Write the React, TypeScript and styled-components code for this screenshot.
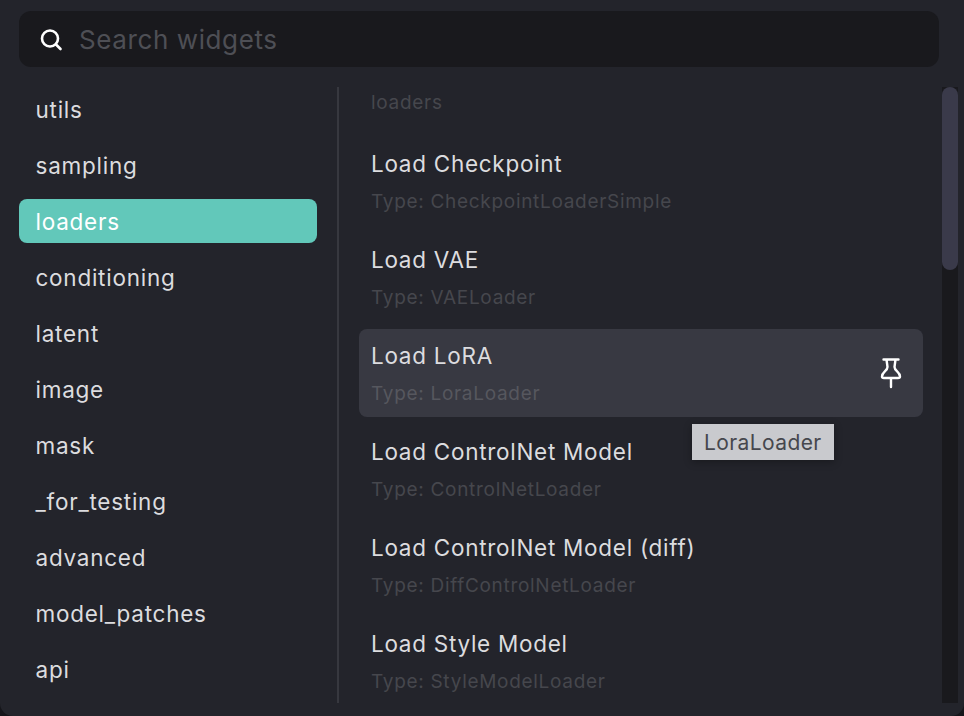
import { createGlobalStyle, styled } from 'styled-components';

const categories = [
  'utils',
  'sampling',
  'loaders',
  'conditioning',
  'latent',
  'image',
  'mask',
  '_for_testing',
  'advanced',
  'model_patches',
  'api',
];

const widgets = [
  { title: 'Load Checkpoint', type: 'CheckpointLoaderSimple' },
  { title: 'Load VAE', type: 'VAELoader' },
  { title: 'Load LoRA', type: 'LoraLoader', hovered: true },
  { title: 'Load ControlNet Model', type: 'ControlNetLoader' },
  { title: 'Load ControlNet Model (diff)', type: 'DiffControlNetLoader' },
  { title: 'Load Style Model', type: 'StyleModelLoader' },
];

const GlobalStyle = createGlobalStyle`
  html, body {
    margin: 0;
    height: 100%;
    overflow: hidden;
    background: #15151a;
  }
`;

const Panel = styled.div`
  width: 964px;
  height: 716px;
  box-sizing: border-box;
  padding: 11px 25px 0 19px;
  border-radius: 0 0 13px 13px;
  background: #23242b;
  font-family: Inter, sans-serif;
  overflow: hidden;
`;

const SearchBar = styled.div`
  display: flex;
  align-items: center;
  gap: 16px;
  height: 56px;
  box-sizing: border-box;
  padding-left: 21px;
  border-radius: 12px;
  background: #19191d;
`;

const SearchIcon = styled.svg`
  width: 23px;
  height: 23px;
  flex: none;
`;

const SearchText = styled.span`
  font-size: 26px;
  letter-spacing: 0.6px;
  color: #4e4f55;
`;

const Body = styled.div`
  display: flex;
  margin-top: 20px;
  height: 616px;
`;

const Sidebar = styled.nav`
  width: 298px;
  flex: none;
  display: flex;
  flex-direction: column;
  gap: 12px;
`;

const Category = styled.div<{ $active?: boolean }>`
  height: 44px;
  line-height: 46px;
  padding-left: 16.5px;
  border-radius: 8px;
  font-size: 22.5px;
  letter-spacing: 0.75px;
  color: ${(p) => (p.$active ? '#ffffff' : '#dcdcdf')};
  background: ${(p) => (p.$active ? '#62c8ba' : 'transparent')};
`;

const Divider = styled.div`
  width: 2px;
  flex: none;
  margin-left: 20px;
  background: #37383f;
`;

const List = styled.div`
  flex: none;
  width: 564px;
  margin-left: 20px;
  display: flex;
  flex-direction: column;
`;

const Heading = styled.div`
  flex: none;
  height: 42px;
  line-height: 32px;
  padding-left: 12px;
  font-size: 19px;
  letter-spacing: 0.7px;
  color: #46474d;
`;

const Row = styled.div<{ $hovered?: boolean }>`
  position: relative;
  flex: none;
  height: 88px;
  margin-top: 8px;
  box-sizing: border-box;
  padding: 12px 12px 0;
  border-radius: 8px;
  background: ${(p) => (p.$hovered ? '#383942' : 'transparent')};
`;

const Title = styled.div`
  font-size: 22.5px;
  line-height: 30px;
  letter-spacing: 0.72px;
  color: #dcdcdf;
`;

const TypeLine = styled.div<{ $hovered?: boolean }>`
  margin-top: 11px;
  font-size: 19px;
  line-height: 24px;
  letter-spacing: 0.7px;
  color: ${(p) => (p.$hovered ? '#56575e' : '#46474d')};
`;

const PinIcon = styled.svg`
  position: absolute;
  right: 19px;
  top: 26px;
  width: 26px;
  height: 34px;
`;

const Tooltip = styled.div`
  position: absolute;
  left: 333px;
  top: 95px;
  padding: 0 12px;
  height: 36px;
  line-height: 37px;
  font-size: 21px;
  letter-spacing: 0.4px;
  color: #46474d;
  background: #c9cace;
  box-shadow: 0 2px 8px rgba(0, 0, 0, 0.3);
  z-index: 2;
`;

const ScrollTrack = styled.div`
  flex: none;
  width: 16px;
  margin-left: 19px;
  background: #19191d;
`;

const ScrollThumb = styled.div`
  height: 183px;
  border-radius: 8px;
  background: #3a3a4a;
`;

export default function App() {
  return (
    <Panel>
      <GlobalStyle />
      <SearchBar>
        <SearchIcon viewBox="0 0 23 23" fill="none" stroke="#ffffff" strokeWidth="2.6" strokeLinecap="round">
          <circle cx="10" cy="10.5" r="8" />
          <path d="M16 16.5 L20.5 21" />
        </SearchIcon>
        <SearchText>Search widgets</SearchText>
      </SearchBar>
      <Body>
        <Sidebar>
          {categories.map((name) => (
            <Category key={name} $active={name === 'loaders'}>
              {name}
            </Category>
          ))}
        </Sidebar>
        <Divider />
        <List>
          <Heading>loaders</Heading>
          {widgets.map((w) => (
            <Row key={w.type} $hovered={w.hovered}>
              <Title>{w.title}</Title>
              <TypeLine $hovered={w.hovered}>Type: {w.type}</TypeLine>
              {w.hovered && (
                <>
                  <PinIcon viewBox="0 0 26 34" fill="none" stroke="#ffffff" strokeWidth="2.4" strokeLinejoin="round" strokeLinecap="round">
                    <path d="M5.5 4.5 H20.5 M8.5 4.5 L9.5 12 C9.5 16 4 17 4 21.5 C4 22.5 5 23 6 23 H20 C21 23 22 22.5 22 21.5 C22 17 16.5 16 16.5 12 L17.5 4.5 M13 23 V32" />
                  </PinIcon>
                  <Tooltip>{w.type}</Tooltip>
                </>
              )}
            </Row>
          ))}
        </List>
        <ScrollTrack>
          <ScrollThumb />
        </ScrollTrack>
      </Body>
    </Panel>
  );
}
